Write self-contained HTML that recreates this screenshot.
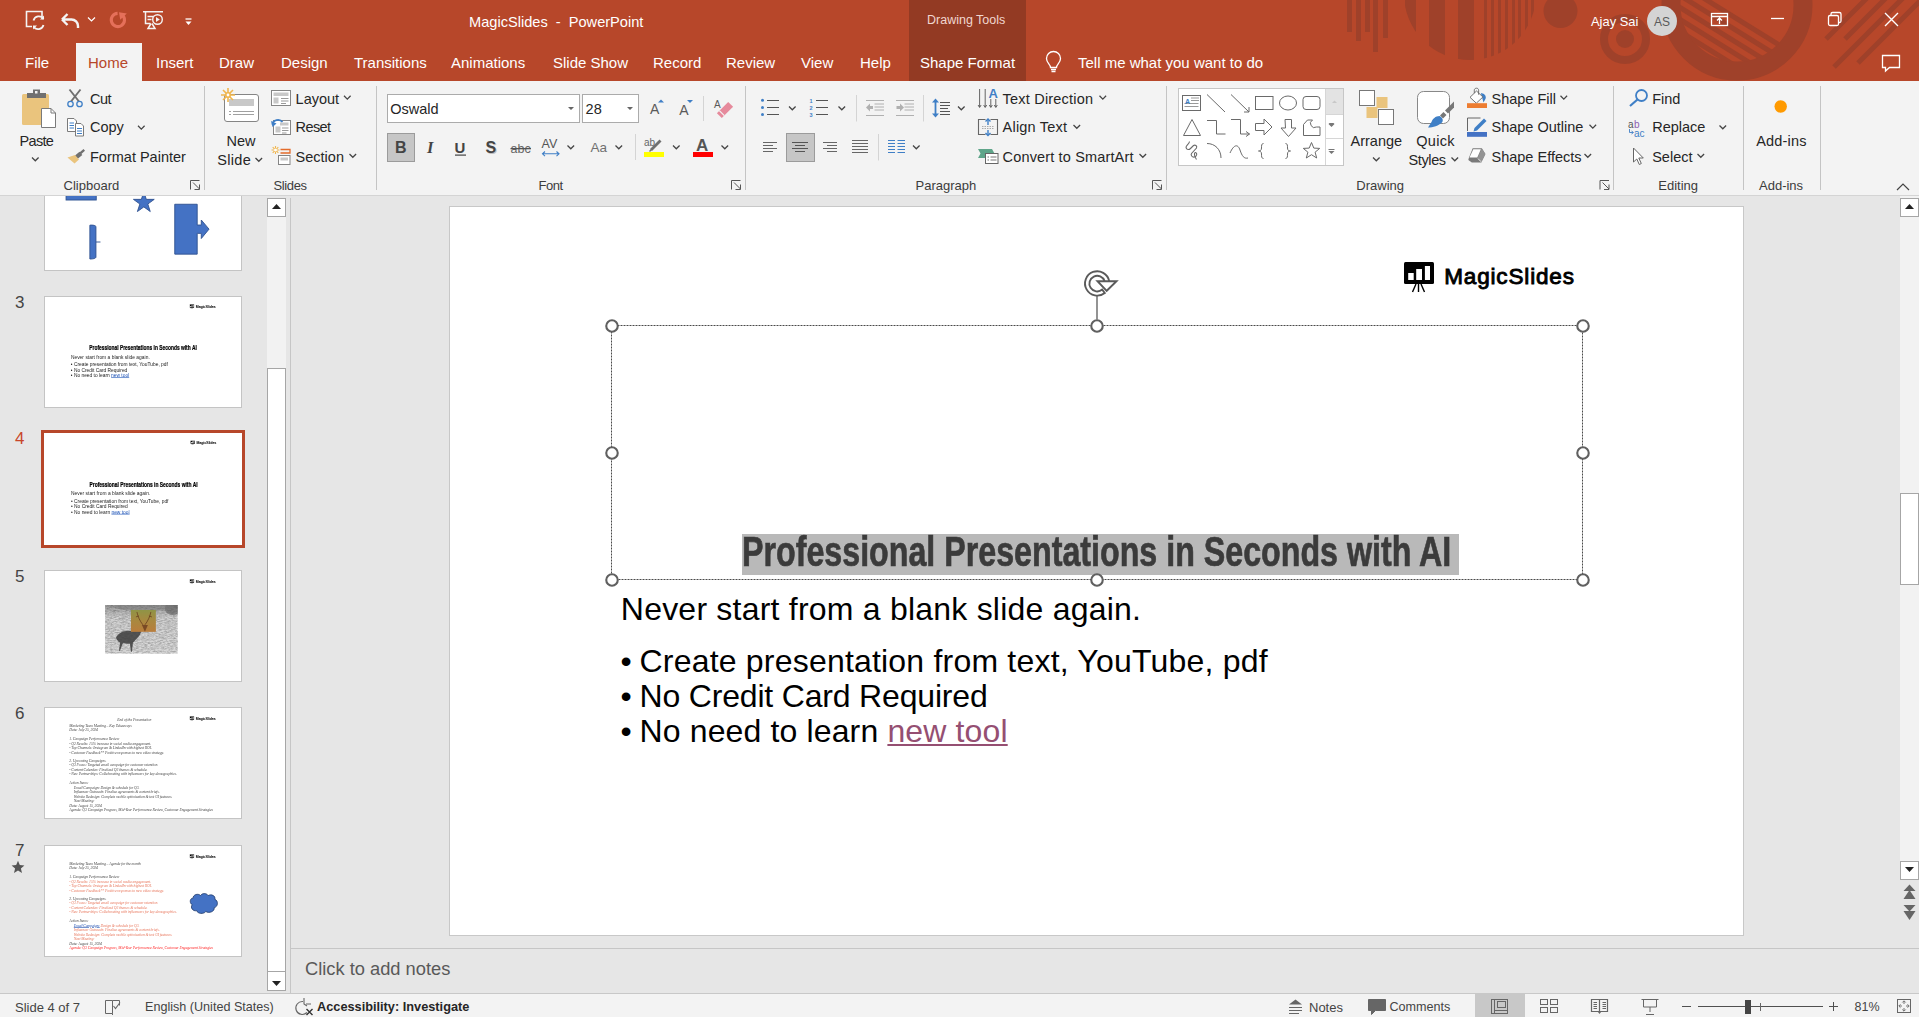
<!DOCTYPE html>
<html><head><meta charset="utf-8">
<style>
*{margin:0;padding:0;box-sizing:border-box}
html,body{width:1919px;height:1017px;overflow:hidden;background:#e6e6e6;font-family:"Liberation Sans",sans-serif;color:#262626}
.a{position:absolute}
.t{position:absolute;white-space:nowrap;line-height:1}
#top{left:0;top:0;width:1919px;height:81px;background:#b7472a}
#ctx{left:909px;top:0;width:117px;height:81px;background:#933a23}
#ribbon{left:0;top:81px;width:1919px;height:115px;background:#f3f3f3;border-bottom:1px solid #d4d4d4}
.tab{color:#fff;font-size:15px;top:55px}
.sep{position:absolute;width:1px;background:#d2d2d2}
.rl{font-size:14.5px;color:#262626}
.gl{font-size:13px;color:#444;top:178px}
#status{left:0;top:993px;width:1919px;height:24px;background:#f3f3f3;border-top:1px solid #c8c8c8}
.st{font-size:13px;color:#444;top:1001px}
</style></head><body>
<!-- title bar -->
<div id="top" class="a"></div>
<div id="ctx" class="a"></div>
<svg class="a" style="left:0;top:0" width="1919" height="81" viewBox="0 0 1919 81">
<defs>
<clipPath id="cbar"><rect x="0" y="0" width="1919" height="81"/></clipPath>
<mask id="m1"><rect x="1400" y="-10" width="140" height="90" fill="#000"/>
<rect x="1405" y="-5" width="11" height="90" fill="#fff"/><rect x="1429" y="-5" width="16" height="90" fill="#fff"/><rect x="1458" y="-5" width="16" height="90" fill="#fff"/>
<rect x="1484" y="-5" width="3" height="90" fill="#fff"/><rect x="1491" y="-5" width="3" height="90" fill="#fff"/><rect x="1498" y="-5" width="3" height="90" fill="#fff"/><rect x="1505" y="-5" width="3" height="90" fill="#fff"/><rect x="1512" y="-5" width="3" height="90" fill="#fff"/><rect x="1518" y="-5" width="3" height="90" fill="#fff"/><rect x="1525" y="-5" width="3" height="90" fill="#fff"/><rect x="1531" y="-5" width="3" height="90" fill="#fff"/>
</mask>
<clipPath id="cin"><circle cx="1737" cy="5" r="57"/></clipPath>
</defs>
<g fill="#9f412a">
<rect x="1347" y="0" width="5" height="32"/><rect x="1356" y="0" width="5" height="41"/><rect x="1365" y="0" width="5" height="32"/><rect x="1373" y="0" width="5" height="52"/><rect x="1383" y="0" width="5" height="38"/>
<circle cx="1470" cy="-6" r="66" mask="url(#m1)"/>
<circle cx="1560.5" cy="11" r="17"/>
<circle cx="1625" cy="39" r="21" fill="none" stroke="#9f412a" stroke-width="8"/>
<circle cx="1625" cy="39" r="9"/>
<circle cx="1737" cy="5" r="66" fill="none" stroke="#9f412a" stroke-width="19"/>
</g>
<g stroke="#9f412a" stroke-width="5" clip-path="url(#cin)">
<line x1="1640" y1="-41.3" x2="1800" y2="57.9"/><line x1="1640" y1="-29.3" x2="1800" y2="69.9"/><line x1="1640" y1="-17.3" x2="1800" y2="81.9"/><line x1="1640" y1="-5.3" x2="1800" y2="93.9"/><line x1="1640" y1="6.7" x2="1800" y2="105.9"/><line x1="1640" y1="18.7" x2="1800" y2="117.9"/>
</g>
<g stroke="#9f412a" stroke-width="5">
<line x1="1826" y1="39" x2="1880" y2="-15"/><line x1="1845" y1="39" x2="1899" y2="-15"/><line x1="1834" y1="67" x2="1930" y2="-29"/><line x1="1858" y1="63" x2="1950" y2="-29"/>
</g>
</svg>

<svg class="a" style="left:0;top:0" width="200" height="42" viewBox="0 0 200 42" fill="none" stroke="#fff" stroke-width="1.6">
<path d="M32 26.5H26.5V11.5H42V17" stroke="#f4f4f4"/>
<path d="M33.5 20.5a5.5 5.5 0 0 1 10 -1.5M43.5 25a5.5 5.5 0 0 1 -10 1.5" stroke="#f4f4f4" stroke-width="1.8"/>
<path d="M44 15.5v4h-4z M33 29.5v-4h4z" fill="#f4f4f4" stroke="none"/>
<path d="M62 19.5l5.5-5.5M62 19.5l5.5 5.5M62.5 19.5h9a6.5 6.5 0 0 1 6.5 6.5v2" stroke="#f4f4f4" stroke-width="2.4"/>
<path d="M88 17.5l3.5 3.5 3.5-3.5" stroke="#fff" stroke-width="1.2"/>
<path d="M117.6 13.4A6.6 6.6 0 1 0 122.2 15" stroke="#e5705a" stroke-width="3.1"/>
<path d="M119 12.2L126.8 13.4L120.2 19.8z" fill="#e5705a" stroke="none"/>
<path d="M143 11.8h20M145.5 12v11.5h5M151 23.5l-3 5h7l-3-5" stroke="#f4f4f4" stroke-width="1.5"/>
<path d="M147.5 16.5h6M147.5 19.5h4" stroke="#f4f4f4" stroke-width="1.3"/>
<circle cx="157.5" cy="19.5" r="4.8" stroke="#f4f4f4" stroke-width="1.4"/>
<path d="M156 17v5l3.8-2.5z" fill="#f4f4f4" stroke="none"/>
<path d="M185.5 19h6" stroke="#fff" stroke-width="1.3"/>
<path d="M185.5 21.5h6l-3 3.5z" fill="#fff" stroke="none"/>
</svg>
<svg class="a" style="left:1700px;top:0" width="219" height="81" viewBox="1700 0 219 81" fill="none" stroke="#fff" stroke-width="1.3">
<rect x="1711.5" y="13.5" width="16" height="12"/><path d="M1712 16.5h15M1719.5 24v-6M1717 20.5l2.5-2.5 2.5 2.5"/>
<path d="M1771 18.5h13"/>
<rect x="1828.5" y="15.5" width="10" height="10" rx="1.5"/><path d="M1831 15.5v-1.5a1.5 1.5 0 0 1 1.5 -1.5h7a1.5 1.5 0 0 1 1.5 1.5v7a1.5 1.5 0 0 1 -1.5 1.5h-1.5"/>
<path d="M1885 13l13 13M1898 13l-13 13" stroke-width="1.4"/>
<path d="M1882.5 55.5h17v12h-10l-4 3.5v-3.5h-3z"/>
</svg>
<svg class="a" style="left:1040px;top:48px" width="30" height="30" viewBox="0 0 30 30" fill="none" stroke="#fff" stroke-width="1.3">
<path d="M10.5 19.5c0-3-4-4.5-4-9a7 7 0 0 1 14 0c0 4.5-4 6-4 9z"/><path d="M11 21.5h5M11.5 23.5h4"/>
</svg>

<div class="t" style="left:469px;top:15.3px;font-size:14.6px;color:#fff">MagicSlides &nbsp;-&nbsp; PowerPoint</div>
<div class="t" style="left:927px;top:14px;font-size:12.5px;color:#f1d6cf">Drawing Tools</div>
<div class="a" style="left:76px;top:43px;width:66px;height:38px;background:#f3f3f3"></div>
<div class="t tab" style="left:25px">File</div>
<div class="t tab" style="left:88px;color:#b7472a">Home</div>
<div class="t tab" style="left:156px">Insert</div>
<div class="t tab" style="left:219px">Draw</div>
<div class="t tab" style="left:281px">Design</div>
<div class="t tab" style="left:354px">Transitions</div>
<div class="t tab" style="left:451px">Animations</div>
<div class="t tab" style="left:553px">Slide Show</div>
<div class="t tab" style="left:653px">Record</div>
<div class="t tab" style="left:726px">Review</div>
<div class="t tab" style="left:801px">View</div>
<div class="t tab" style="left:860px">Help</div>
<div class="t tab" style="left:920px">Shape Format</div>
<div class="t tab" style="left:1078px">Tell me what you want to do</div>
<div class="t" style="left:1591px;top:15.5px;font-size:12.9px;color:#fff">Ajay Sai</div>
<div class="a" style="left:1647px;top:6px;width:30px;height:30px;border-radius:50%;background:#d4d4d4"></div>
<div class="t" style="left:1654px;top:15.5px;font-size:12px;color:#5a5a5a">AS</div>

<!-- ribbon -->
<div id="ribbon" class="a"></div>
<!-- ribbon text -->
<style>
.rt{position:absolute;white-space:nowrap;line-height:1;font-size:14.5px;color:#262626}
.r1{top:91.5px}.r2{top:120.4px}.r3{top:149.5px}.b1{top:133.5px}.b2{top:153px}
.gl{position:absolute;white-space:nowrap;line-height:1;font-size:13px;color:#3c3c3c;top:178.5px}
</style>
<div class="rt b1" style="left:19.6px;letter-spacing:-0.7px">Paste</div>
<div class="rt r1" style="left:90px;letter-spacing:-0.5px">Cut</div>
<div class="rt r2" style="left:90px">Copy</div>
<div class="rt r3" style="left:90px">Format Painter</div>
<div class="gl" style="left:63.6px">Clipboard</div>
<div class="rt b1" style="left:226.5px">New</div>
<div class="rt b2" style="left:217.3px;letter-spacing:0.3px">Slide</div>
<div class="rt r1" style="left:295.6px">Layout</div>
<div class="rt r2" style="left:295.6px;letter-spacing:-0.6px">Reset</div>
<div class="rt r3" style="left:295.6px">Section</div>
<div class="gl" style="left:273.4px;letter-spacing:-0.35px">Slides</div>
<div class="a" style="left:387px;top:94px;width:193px;height:29px;background:#fff;border:1px solid #ababab"></div>
<div class="a" style="left:582px;top:94px;width:57px;height:29px;background:#fff;border:1px solid #ababab"></div>
<div class="rt" style="left:390.3px;top:102px;font-size:14.5px">Oswald</div>
<div class="rt" style="left:585.6px;top:102px;font-size:14.5px">28</div>
<div class="a" style="left:387px;top:133px;width:28px;height:29px;background:#c6c6c6;border:1px solid #9b9b9b"></div>
<div class="gl" style="left:538.5px;letter-spacing:-0.5px">Font</div>
<div class="a" style="left:786px;top:133px;width:28.5px;height:28.5px;background:#c6c6c6;border:1px solid #9b9b9b"></div>
<div class="gl" style="left:915.5px">Paragraph</div>
<div class="rt r1" style="left:1002.6px;letter-spacing:0.2px">Text Direction</div>
<div class="rt r2" style="left:1002.6px;letter-spacing:0.2px">Align Text</div>
<div class="rt r3" style="left:1002.6px;letter-spacing:0.15px">Convert to SmartArt</div>
<div class="a" style="left:1178px;top:88px;width:166px;height:78px;background:#fff;border:1px solid #c6c6c6"></div>
<div class="a" style="left:1325px;top:89px;width:18px;height:26px;background:#e3e3e3"></div>
<div class="a" style="left:1325px;top:89px;width:1px;height:76px;background:#d6d6d6"></div>
<div class="a" style="left:1325px;top:114px;width:18px;height:1px;background:#d6d6d6"></div>
<div class="a" style="left:1325px;top:138px;width:18px;height:1px;background:#d6d6d6"></div>
<div class="rt b1" style="left:1350.5px">Arrange</div>
<div class="rt b1" style="left:1416.2px;letter-spacing:0.3px">Quick</div>
<div class="rt b2" style="left:1408.6px;letter-spacing:-0.4px">Styles</div>
<div class="rt r1" style="left:1491.5px">Shape Fill</div>
<div class="rt r2" style="left:1491.5px">Shape Outline</div>
<div class="rt r3" style="left:1491.5px">Shape Effects</div>
<div class="gl" style="left:1356.3px">Drawing</div>
<div class="rt r1" style="left:1652.2px">Find</div>
<div class="rt r2" style="left:1652.2px">Replace</div>
<div class="rt r3" style="left:1652.2px">Select</div>
<div class="gl" style="left:1658.3px">Editing</div>
<div class="rt b1" style="left:1756.2px;letter-spacing:0.2px">Add-ins</div>
<div class="gl" style="left:1759px">Add-ins</div>
<svg class="a" style="left:0;top:0" width="1919" height="200" viewBox="0 0 1919 200"><g stroke="#c4c4c4" stroke-width="1"><line x1="204.5" y1="86" x2="204.5" y2="190"/><line x1="376.5" y1="86" x2="376.5" y2="190"/><line x1="745.5" y1="86" x2="745.5" y2="190"/><line x1="1166.5" y1="86" x2="1166.5" y2="190"/><line x1="1613.5" y1="86" x2="1613.5" y2="190"/><line x1="1743.5" y1="86" x2="1743.5" y2="190"/><line x1="1820.5" y1="86" x2="1820.5" y2="190"/></g><g stroke="#d4d4d4"><line x1="703.5" y1="96" x2="703.5" y2="121"/><line x1="635.5" y1="134" x2="635.5" y2="160"/><line x1="856.5" y1="95" x2="856.5" y2="121.5"/><line x1="923.5" y1="95" x2="923.5" y2="121.5"/><line x1="878.5" y1="134" x2="878.5" y2="160.5"/></g><g fill="none" stroke="#555" stroke-width="1"><path d="M190.5 189.5v-9h9M193 182.5l6.5 6.5M199.5 184.5v5h-5" /><path d="M731.5 189.5v-9h9M734 182.5l6.5 6.5M740.5 184.5v5h-5" /><path d="M1152.5 189.5v-9h9M1155 182.5l6.5 6.5M1161.5 184.5v5h-5" /><path d="M1600.0 189.5v-9h9M1602.5 182.5l6.5 6.5M1609.0 184.5v5h-5" /></g><g fill="none" stroke="#444" stroke-width="1.25"><path d="M32 157.5l3.3 3.3 3.3-3.3" /><path d="M138 125.8l3.3 3.3 3.3-3.3" /><path d="M255.5 158l3.3 3.3 3.3-3.3" /><path d="M344 95.8l3.3 3.3 3.3-3.3" /><path d="M349.5 154l3.3 3.3 3.3-3.3" /><path d="M567.5 145.5l3.3 3.3 3.3-3.3" /><path d="M615.5 145.5l3.3 3.3 3.3-3.3" /><path d="M673 145.5l3.3 3.3 3.3-3.3" /><path d="M721.5 145.5l3.3 3.3 3.3-3.3" /><path d="M789 106.5l3.3 3.3 3.3-3.3" /><path d="M838.5 106.5l3.3 3.3 3.3-3.3" /><path d="M958 106.5l3.3 3.3 3.3-3.3" /><path d="M913 145.5l3.3 3.3 3.3-3.3" /><path d="M1099.5 95.8l3.3 3.3 3.3-3.3" /><path d="M1073.5 125l3.3 3.3 3.3-3.3" /><path d="M1139.5 154l3.3 3.3 3.3-3.3" /><path d="M1373 157.5l3.3 3.3 3.3-3.3" /><path d="M1451.5 157.5l3.3 3.3 3.3-3.3" /><path d="M1560.5 95.8l3.3 3.3 3.3-3.3" /><path d="M1589.5 124.8l3.3 3.3 3.3-3.3" /><path d="M1584.5 154l3.3 3.3 3.3-3.3" /><path d="M1719.5 125.5l3.3 3.3 3.3-3.3" /><path d="M1697.5 154l3.3 3.3 3.3-3.3" /></g>
<!-- Paste -->
<rect x="22" y="94" width="27" height="31" rx="1.5" fill="#eac47d"/>
<path d="M27 98v-5h6v-3.5h7v3.5h6v5z" fill="#707070"/>
<rect x="35" y="91" width="2.5" height="2.5" fill="#f3f3f3"/>
<path d="M41.5 108.5h9.5l4.5 4.5v14.5h-14z" fill="#fff" stroke="#7a7a7a"/>
<path d="M51 108.5v4.5h4.5" fill="none" stroke="#7a7a7a"/>
<!-- scissors -->
<path d="M69.5 89.5l9.5 12M80.5 89.5l-9.5 12" stroke="#707070" stroke-width="1.9"/>
<circle cx="70.5" cy="104" r="2.7" stroke="#3f7fc6" fill="none" stroke-width="1.3"/>
<circle cx="79.5" cy="104" r="2.7" stroke="#3f7fc6" fill="none" stroke-width="1.3"/>
<!-- copy -->
<path d="M67.5 118.5h6.5l2.5 2.5v10.5h-9z" fill="#fff" stroke="#7a7a7a"/>
<path d="M69.5 123h4.5M69.5 125.5h4.5M69.5 128h4.5" stroke="#3f7fc6"/>
<path d="M75.5 123.5h5.5l2.5 2.5v10h-8z" fill="#fff" stroke="#7a7a7a"/>
<path d="M77 128.5h5M77 131h5M77 133.5h5" stroke="#3f7fc6"/>
<!-- format painter -->
<path d="M79.5 152.5l4-3.5 1.5 1.8-4 3.5z" fill="#707070"/>
<path d="M75 155.5l4.5-3.8 2.8 3.2-4.5 3.8z" fill="#707070"/>
<path d="M67.5 157.5l7.5-2.5 4 4.5-4.5 4z" fill="#eac47d"/>
<!-- new slide -->
<rect x="224.5" y="94.5" width="34" height="27" rx="2.5" fill="#fff" stroke="#858585"/>
<rect x="229" y="99" width="25" height="7" fill="#c8c8c8"/>
<path d="M229 111.5h2M233 111.5h21M229 114.5h2M233 114.5h21" stroke="#a0a0a0"/>
<g stroke="#f0b64e" stroke-width="1.6"><path d="M228 88v14M221 95h14M223 90l10 10M233 90l-10 10"/></g>
<circle cx="228" cy="95" r="3" fill="#f0b64e"/><circle cx="228" cy="95" r="1.4" fill="#fff"/>
<!-- layout -->
<rect x="271.5" y="90.5" width="19" height="15" fill="#fff" stroke="#858585"/>
<rect x="273.5" y="92.5" width="15" height="3.5" fill="#c8c8c8"/>
<rect x="273.5" y="97.5" width="5" height="6" fill="#c8c8c8"/>
<path d="M281 98.5h7.5M281 101h7.5M281 103.5h5" stroke="#999"/>
<!-- reset -->
<rect x="273.5" y="120.5" width="17" height="14" fill="#fff" stroke="#858585"/>
<rect x="275.5" y="126.5" width="5" height="6" fill="#c8c8c8"/>
<rect x="280" y="122.5" width="8.5" height="3" fill="#c8c8c8"/>
<path d="M282 128h6.5M282 130.5h6.5M282 133h4.5" stroke="#999"/>
<path d="M272.5 124.5a5.5 5 0 0 1 10-2.5" fill="none" stroke="#3f7fc6" stroke-width="1.8"/>
<path d="M271 121l1.5 6 4-3.5z" fill="#3f7fc6"/>
<!-- section -->
<g stroke="#f0b64e" stroke-width="1.1"><path d="M275.5 146v8M271.5 150h8M272.7 147.2l5.6 5.6M278.3 147.2l-5.6 5.6"/></g>
<circle cx="275.5" cy="150" r="1.5" fill="#fff"/>
<path d="M280.5 149.5h9.5v3.5h-9.5" fill="none" stroke="#e46c2b" stroke-width="1.3"/>
<rect x="278.5" y="155.5" width="11.5" height="9" fill="#fff" stroke="#858585"/>
<rect x="280.5" y="157.5" width="7.5" height="3" fill="#c8c8c8"/>
<!-- font dropdown arrows -->
<path d="M568 107h6l-3 3z M627 107h6l-3 3z" fill="#666"/>
<!-- grow/shrink -->
<text x="650" y="114.3" font-size="14" fill="#5a5a5a" font-family="Liberation Sans">A</text>
<path d="M658 102.5l3-3 3 3z" fill="#3f7fc6"/>
<text x="679.2" y="114.8" font-size="14" fill="#5a5a5a" font-family="Liberation Sans">A</text>
<path d="M687 100h6l-3 3z" fill="#3f7fc6"/>
<!-- clear formatting -->
<text x="714" y="108" font-size="10" fill="#5a5a5a" font-family="Liberation Sans">A</text>
<path d="M733.1 106.8l-4.9-4.9-11.3 11.3 4.9 4.9z" fill="#e68a9c"/>
<path d="M719.3 110.7l5 5" stroke="#f3f3f3" stroke-width="1.2"/>
<!-- B I U S abc AV -->
<text x="395" y="153.3" font-size="16" font-weight="bold" fill="#444" font-family="Liberation Sans">B</text>
<text x="427" y="153.3" font-size="16.5" font-style="italic" font-weight="bold" fill="#444" font-family="Liberation Serif">I</text>
<text x="454.5" y="152.5" font-size="15" font-weight="bold" fill="#444" font-family="Liberation Sans">U</text>
<rect x="455" y="154.5" width="11" height="1.2" fill="#444"/>
<text x="486.5" y="154.3" font-size="16" font-weight="bold" fill="#c0c0c0" font-family="Liberation Sans">S</text>
<text x="485.5" y="153.3" font-size="16" font-weight="bold" fill="#444" font-family="Liberation Sans">S</text>
<text x="510.5" y="153" font-size="12.5" fill="#666" font-family="Liberation Sans">abc</text>
<rect x="510.5" y="148" width="20.5" height="1.3" fill="#555"/>
<text x="541.5" y="148.3" font-size="12.5" fill="#555" font-family="Liberation Sans">AV</text>
<path d="M542.5 153.8h16.5M545 151.5l-2.5 2.3 2.5 2.3M556.5 151.5l2.5 2.3-2.5 2.3" fill="none" stroke="#3f7fc6" stroke-width="1.1"/>
<text x="590.5" y="151.5" font-size="13.5" fill="#707070" font-family="Liberation Sans">Aa</text>
<!-- highlighter -->
<text x="644" y="146" font-size="10" fill="#666" font-family="Liberation Sans">ab</text>
<path d="M651 150l9.5-9.5" stroke="#707070" stroke-width="2.8"/>
<path d="M649.5 151.5l2-2" stroke="#707070" stroke-width="1.5"/>
<rect x="644" y="152" width="20" height="5" fill="#ffff00"/>
<!-- font color -->
<text x="696" y="151" font-size="17" font-weight="bold" fill="#555" font-family="Liberation Sans">A</text>
<rect x="693" y="152" width="20" height="5" fill="#ff0000"/>

<!-- bullets -->
<g fill="#3f7fc6"><circle cx="762.5" cy="100.3" r="1.5"/><circle cx="762.5" cy="107.4" r="1.5"/><circle cx="762.5" cy="114.4" r="1.5"/></g>
<path d="M767 100.5h12M767 107.5h12M767 114.5h12M816 100.5h12M816 107.5h12M816 114.5h12" stroke="#555"/>
<text x="809.5" y="103" font-size="5.5" fill="#3f7fc6" font-weight="bold" font-family="Liberation Sans">1</text>
<text x="809.5" y="110" font-size="5.5" fill="#3f7fc6" font-weight="bold" font-family="Liberation Sans">2</text>
<text x="809.5" y="117" font-size="5.5" fill="#3f7fc6" font-weight="bold" font-family="Liberation Sans">3</text>
<!-- indents -->
<path d="M866 100.5h18M874.5 104h9.5M874.5 107h9.5M874.5 110h9.5M866 115.5h18M896 100.5h18M904.5 104h9.5M904.5 107h9.5M904.5 110h9.5M896 115.5h18" stroke="#b0b0b0"/>
<path d="M866 107.5l4-4v2.5h3v3h-3v2.5z" fill="#b0b0b0"/>
<path d="M904 107.5l-4-4v2.5h-3.5v3h3.5v2.5z" fill="#b0b0b0"/>
<!-- line spacing -->
<path d="M935.5 101v14" stroke="#3f7fc6" stroke-width="1.8"/>
<path d="M932 102.5l3.5-4 3.5 4zM932 113.5l3.5 4 3.5-4z" fill="#3f7fc6"/>
<path d="M940 102.5h10M940 105.5h10M940 108.5h8M940 111.5h10M940 114.5h10" stroke="#555"/>
<!-- align -->
<path d="M763 142.5h14M763 145.5h10M763 148.5h14M763 151.5h10" stroke="#666"/>
<path d="M792 142.5h16M795 145.5h10M792 148.5h16M795 151.5h10" stroke="#555"/>
<path d="M823 142.5h14M827 145.5h10M823 148.5h14M827 151.5h10" stroke="#666"/>
<path d="M852 140.5h16M852 143.5h16M852 146.5h16M852 149.5h16M852 152.5h16" stroke="#666"/>
<path d="M888 140.5h7M888 143.5h7M888 146.5h7M888 149.5h7M888 152.5h7M897.5 140.5h7.5M897.5 143.5h7.5M897.5 146.5h7.5M897.5 149.5h7.5M897.5 152.5h7.5" stroke="#3f7fc6"/>
<!-- text direction -->
<path d="M979.6 89v18M985.2 89v18M990.8 99v8M995.8 99v8" stroke="#555" stroke-width="0.9"/>
<path d="M978.1 105l1.5 2.5 1.5-2.5M983.7 105l1.5 2.5 1.5-2.5M989.3 105l1.5 2.5 1.5-2.5M994.3 105l1.5 2.5 1.5-2.5" fill="none" stroke="#555" stroke-width="0.9"/>
<text x="988.6" y="98" font-size="13" font-weight="bold" fill="#3f7fc6" font-family="Liberation Sans">A</text>
<!-- align text -->
<path d="M985.5 119.5h-7v15h7M990.5 119.5h7v15h-7" fill="none" stroke="#666" stroke-width="1.1"/>
<path d="M982 126.5h12M982 128.5h12" stroke="#999" stroke-width="0.8" stroke-dasharray="1.5 1"/>
<path d="M988 120v5M988 130v5" stroke="#3f7fc6" stroke-width="1.4"/>
<path d="M985.5 121.5l2.5-2.5 2.5 2.5M985.5 133l2.5 2.5 2.5-2.5" fill="none" stroke="#3f7fc6" stroke-width="1.4"/>
<!-- smartart -->
<path d="M978 149h14l2.5 4.5-2.5 4.5h-14l2.5-4.5z" fill="#5fa58a"/>
<rect x="985.5" y="153.5" width="12.5" height="10" fill="#fff" stroke="#666"/>
<path d="M987.5 157h1.5M990.5 157h6M987.5 160h1.5M990.5 160h6" stroke="#666" stroke-width="0.9"/>

<g fill="none" stroke="#6a6a6a" stroke-width="1">
<rect x="1182.5" y="95.5" width="18" height="15"/>
<path d="M1191 98h8M1191 100.5h8M1184.5 103.5h14M1184.5 106.5h14" stroke="#999"/>
<path d="M1207 94.5l18 17.5M1231 94.5l18 17.5M1244 112h5v-5"/>
<rect x="1255.5" y="96.5" width="17.5" height="13"/>
<ellipse cx="1288" cy="103" rx="8.5" ry="7"/>
<rect x="1303" y="96.5" width="17" height="13" rx="3"/>
<path d="M1183.5 135.5l8.5-16 8.5 16z"/>
<path d="M1207 120.5h9.5v13.5h9"/>
<path d="M1231 119.5h9.5v14.5h9M1246 131.5l3.5 2.5-3.5 2.5"/>
<path d="M1255.5 123.5h8.5v-4.5l8 8-8 8v-4.5h-8.5z"/>
<path d="M1285 119.5h6.5v8.5h4.5l-7.5 8.5-7.5-8.5h4.5z"/>
<path d="M1303.5 124.5l4-4.5h5a4 4 0 0 0 4 7h3.5v8.5h-16.5z"/>
<path d="M1189.5 141.6C1189.5 144 1185 146 1186.2 148C1187 150 1189 150 1190.5 148.5L1193.5 145.5C1195 144.5 1197.5 145.5 1196.5 148L1191.5 153.5C1190.5 155 1192 157.5 1194.5 157C1197 156.5 1197.5 153 1195.5 152.5C1194 152.5 1194 156 1196.5 159.5" stroke-width="1.1"/>
<path d="M1207 143.5c8 0 14 6 14 14.5"/>
<path d="M1230 153c4-9 8-9 10-3s4 9 8 8"/>
<path d="M1263.5 143.5c-2 0-2 2-2 4.5s-1.5 3-3 3c1.5 0 3 .5 3 3s0 4.5 2 4.5"/>
<path d="M1285.5 143.5c2 0 2 2 2 4.5s1.5 3 3 3c-1.5 0-3 .5-3 3s0 4.5-2 4.5"/>
<path d="M1311.5 142.5l2.3 5.6 5.9.3-4.6 3.8 1.6 5.8-5.2-3.3-5.2 3.3 1.6-5.8-4.6-3.8 5.9-.3z"/>
</g>
<text x="1185" y="104" font-size="7" font-weight="bold" fill="#3f7fc6" font-family="Liberation Sans">A</text>
<path d="M1332 103l2.5-2.5 2.5 2.5z" fill="#c8c8c8"/>
<path d="M1331.5 126l3-3h-6z" fill="#777"/>
<path d="M1328.5 149.5h6" stroke="#777" stroke-width="1"/><path d="M1331.5 154l3-3h-6z" fill="#777"/>
<path d="M1328.5 124h6l-3 3z" fill="#777"/>

<!-- arrange -->
<rect x="1376.5" y="97" width="11" height="11" fill="#eac47d"/>
<rect x="1366.5" y="107" width="11" height="11" fill="#eac47d"/>
<rect x="1359.5" y="90.5" width="15" height="15" fill="#fff" stroke="#777"/>
<rect x="1378.5" y="109.5" width="15" height="15" fill="#fff" stroke="#777"/>
<!-- quick styles -->
<rect x="1417.5" y="91.5" width="32" height="32" rx="6" fill="#fff" stroke="#888"/>
<path d="M1454 101.5l-9 9 3 3 6-6z" fill="#777"/>
<path d="M1443.5 112l-3.5 3.5 3 3 3.5-3.5z" fill="#777"/>
<path d="M1439.5 116c-4 0-7 3-8 6l-3.5 5.5c5 0 11-2 14-5 1.5-2 1-4.5-2.5-6.5z" fill="#3f7fc6"/>
<!-- shape fill -->
<path d="M1480.8 93c2.5 0.5 5 1.5 5 4.5 0 1.5-1.5 3.5-2.3 5z" fill="#3f7fc6"/>
<path d="M1476.5 91l6.4 6-6.6 6.2-6.3-5.9z" fill="#fff" stroke="#666" stroke-width="0.9"/>
<path d="M1474.3 93.2v-3c0-1.2 0.9-2 2.2-2s2.1 0.8 2.1 2v4.5" fill="none" stroke="#666" stroke-width="0.9"/>
<rect x="1467" y="103.2" width="20" height="4.8" fill="#ed7d31"/>
<!-- shape outline -->
<path d="M1467.5 131v-13h13" fill="none" stroke="#666"/>
<path d="M1484 118.5l2.5 2.5-9.5 9.5-3.5 1 1-3.5z" fill="#3f7fc6"/>
<rect x="1467" y="132" width="20" height="4.8" fill="#4472c4"/>
<!-- shape effects -->
<path d="M1472.7 148.3h9.1l3.6 5.6-4.2 8.5h-9.4l-3.5-2.4 0.5-2z" fill="#7a7a7a"/>
<path d="M1481.8 148.3l3.6 5.6-4.2 8.5-3.5-4.4z" fill="#939393"/>
<path d="M1473.3 149.3h7.6l-3.6 8.2h-7.8z" fill="#fff"/>
<path d="M1478 158.6l3 3.1" stroke="#f3f3f3" stroke-width="0.9"/>
<!-- find -->
<circle cx="1641.5" cy="95.5" r="5.5" fill="none" stroke="#3f7fc6" stroke-width="1.8"/>
<path d="M1637.5 99.5l-7.5 6.5" stroke="#3f7fc6" stroke-width="2.2"/>
<!-- replace -->
<text x="1628" y="128" font-size="10" fill="#555" font-family="Liberation Sans">a</text>
<text x="1634" y="128" font-size="10" fill="#8e5fb2" font-family="Liberation Sans">b</text>
<text x="1634" y="136.5" font-size="10" fill="#3f7fc6" font-family="Liberation Sans">ac</text>
<path d="M1629.5 129v3.5h3.5M1631.5 131l2 1.5-2 1.5" fill="none" stroke="#3f7fc6" stroke-width="0.9"/>
<!-- select -->
<path d="M1633.5 148v14l3.3-3 2.5 5.5 2-1-2.5-5.5h4.5z" fill="#fff" stroke="#666" stroke-width="1"/>
<!-- add-ins dot -->
<circle cx="1780.7" cy="106.5" r="6.2" fill="#ff9a00"/>
<!-- collapse -->
<path d="M1897 190l6-6 6 6" fill="none" stroke="#444" stroke-width="1.2"/>
</svg>


<!-- left panel -->
<div class="a" style="left:0;top:196px;width:267px;height:797px;overflow:hidden"><div class="a" style="left:0;top:-196px;width:267px;height:1017px">
<!-- thumbnails -->
<div class="a" style="left:44px;top:158.5px;width:198px;height:112px;background:#fff;border:1px solid #c4c4c4"></div>
<div class="a" style="left:45px;top:159.5px;width:1293px;height:728px;transform:scale(0.15159);transform-origin:0 0;overflow:hidden"><svg class="a" style="left:0;top:0" width="1293" height="728" viewBox="0 0 1293 728">
<g fill="#4472c4" stroke="#2f528f" stroke-width="6">
<rect x="139" y="180" width="199" height="84"/>
<path d="M652 210l16.2 49.7h52.3l-42.3 30.7 16.2 49.7-42.4-30.7-42.4 30.7 16.2-49.7-42.3-30.7h52.3z"/>
<path d="M296 430c20-2 40 2 40 10v200c0 10-20 13-40 13z"/><path d="M336 541h30" />
<path d="M856 292h148v137h27v-33l51 60-51 62v-34h-27v137h-148z"/>
</g></svg></div>
<div class="t" style="left:15px;top:293.5px;font-size:17px;color:#444">3</div>
<div class="a" style="left:44px;top:295.5px;width:198px;height:112px;background:#fff;border:1px solid #c4c4c4"></div>
<div class="a" style="left:45px;top:296.3px;width:1293px;height:728px;transform:scale(0.15159);transform-origin:0 0;overflow:hidden"><svg class="a" style="left:954px;top:55px" width="32" height="38" viewBox="0 0 32 38">
<rect x="0" y="0" width="30" height="22" rx="1.5" fill="#000"/>
<rect x="4.2" y="11" width="5.5" height="7" fill="#fff"/><rect x="12.2" y="7" width="5.8" height="11" fill="#fff"/><rect x="20.9" y="4" width="5.1" height="14" fill="#fff"/>
<path d="M12 22l-3.5 8M14.5 22v8M17 22l3.5 8" stroke="#000" stroke-width="1.4"/>
</svg>
<div class="t" style="left:994.2px;top:58.6px;font-size:22.5px;color:#000;letter-spacing:0.85px;-webkit-text-stroke:0.9px #000">MagicSlides</div>
<div class="t" style="left:292px;top:322.9px;font-size:43px;font-weight:bold;color:#000;-webkit-text-stroke:1.5px #000;transform:scaleX(0.749);transform-origin:0 0">Professional Presentations in Seconds with AI</div>
<div class="t" style="left:170.8px;top:385.9px;font-size:32px;color:#222;letter-spacing:0.22px">Never start from a blank slide again.</div>
<div class="t" style="left:170.5px;top:437.8px;font-size:32px;color:#222">• Create presentation from text, YouTube, pdf</div>
<div class="t" style="left:170.5px;top:472.5px;font-size:32px;color:#222">• No Credit Card Required</div>
<div class="t" style="left:170.5px;top:507.6px;font-size:32px;color:#222">• No need to learn <span style="color:#1f55b8;text-decoration:underline;text-decoration-thickness:4px">new tool</span></div>
</div>
<div class="a" style="left:41px;top:430px;width:204px;height:118px;border:3px solid #b7472a"></div>
<div class="t" style="left:15px;top:430px;font-size:17px;color:#c8462a">4</div>
<div class="a" style="left:44px;top:433px;width:198px;height:112px;background:#fff"></div>
<div class="a" style="left:44.5px;top:432.3px;width:1293px;height:728px;transform:scale(0.15236);transform-origin:0 0;overflow:hidden"><svg class="a" style="left:954px;top:55px" width="32" height="38" viewBox="0 0 32 38">
<rect x="0" y="0" width="30" height="22" rx="1.5" fill="#000"/>
<rect x="4.2" y="11" width="5.5" height="7" fill="#fff"/><rect x="12.2" y="7" width="5.8" height="11" fill="#fff"/><rect x="20.9" y="4" width="5.1" height="14" fill="#fff"/>
<path d="M12 22l-3.5 8M14.5 22v8M17 22l3.5 8" stroke="#000" stroke-width="1.4"/>
</svg>
<div class="t" style="left:994.2px;top:58.6px;font-size:22.5px;color:#000;letter-spacing:0.85px;-webkit-text-stroke:0.9px #000">MagicSlides</div>
<div class="t" style="left:292px;top:322.9px;font-size:43px;font-weight:bold;color:#000;-webkit-text-stroke:1.5px #000;transform:scaleX(0.749);transform-origin:0 0">Professional Presentations in Seconds with AI</div>
<div class="t" style="left:170.8px;top:385.9px;font-size:32px;color:#222;letter-spacing:0.22px">Never start from a blank slide again.</div>
<div class="t" style="left:170.5px;top:437.8px;font-size:32px;color:#222">• Create presentation from text, YouTube, pdf</div>
<div class="t" style="left:170.5px;top:472.5px;font-size:32px;color:#222">• No Credit Card Required</div>
<div class="t" style="left:170.5px;top:507.6px;font-size:32px;color:#222">• No need to learn <span style="color:#1f55b8;text-decoration:underline;text-decoration-thickness:4px">new tool</span></div>
</div>
<div class="t" style="left:15px;top:567.5px;font-size:17px;color:#444">5</div>
<div class="a" style="left:44px;top:570px;width:198px;height:112px;background:#fff;border:1px solid #c4c4c4"></div>
<div class="a" style="left:45px;top:571px;width:1293px;height:728px;transform:scale(0.15159);transform-origin:0 0;overflow:hidden"><svg class="a" style="left:954px;top:55px" width="32" height="38" viewBox="0 0 32 38">
<rect x="0" y="0" width="30" height="22" rx="1.5" fill="#000"/>
<rect x="4.2" y="11" width="5.5" height="7" fill="#fff"/><rect x="12.2" y="7" width="5.8" height="11" fill="#fff"/><rect x="20.9" y="4" width="5.1" height="14" fill="#fff"/>
<path d="M12 22l-3.5 8M14.5 22v8M17 22l3.5 8" stroke="#000" stroke-width="1.4"/>
</svg>
<div class="t" style="left:994.2px;top:58.6px;font-size:22.5px;color:#000;letter-spacing:0.85px;-webkit-text-stroke:0.9px #000">MagicSlides</div><svg class="a" style="left:396px;top:224px" width="480" height="322" viewBox="0 0 73 49" preserveAspectRatio="none">
<defs>
<linearGradient id="g5" x1="0" y1="0" x2="0" y2="1"><stop offset="0" stop-color="#9a9a9a"/><stop offset="0.25" stop-color="#d2d2d2"/><stop offset="1" stop-color="#dadada"/></linearGradient>
<filter id="nz" x="0" y="0" width="100%" height="100%"><feTurbulence type="fractalNoise" baseFrequency="0.35 0.9" numOctaves="2" seed="3"/><feColorMatrix type="matrix" values="0 0 0 0 0  0 0 0 0 0  0 0 0 0 0  0 0 0 -1.6 1.1"/></filter>
<linearGradient id="o5" x1="0" y1="0" x2="0" y2="1"><stop offset="0" stop-color="#8f9446"/><stop offset="0.5" stop-color="#a9883f"/><stop offset="1" stop-color="#b97d3c"/></linearGradient>
</defs>
<rect width="73" height="49" fill="url(#g5)"/>
<rect width="73" height="49" filter="url(#nz)" opacity="0.3"/>
<ellipse cx="68" cy="4" rx="8" ry="6" fill="#5a5a5a" opacity="0.6"/>
<ellipse cx="40" cy="2" rx="30" ry="4" fill="#7a7a7a" opacity="0.5"/>
<path d="M11 33c2-5 8-8 15-7 6 0 9 0 11-1l-2 5c-2 3-5 6-7 8l-1 9h-1l-1-8c-3 0-5 0-7-1l-3 8h-1l1-8c-2-1-3-3-4-5z" fill="#3c3c3c" opacity="0.85"/>
<rect x="26" y="5" width="25" height="22" fill="url(#o5)"/>
<path d="M32 7c1 5 3 9 6 13M46 7c-1 5-3 9-6 13M34 11l-3 1M44 11l3 1" stroke="#6a4020" stroke-width="0.8" fill="none"/>
<path d="M37 20l3 7 3-7z" fill="#7a4a25"/>
</svg></div>
<div class="t" style="left:15px;top:704.5px;font-size:17px;color:#444">6</div>
<div class="a" style="left:44px;top:707px;width:198px;height:112px;background:#fff;border:1px solid #c4c4c4"></div>
<div class="a" style="left:45px;top:708px;width:1293px;height:728px;transform:scale(0.15159);transform-origin:0 0;overflow:hidden"><svg class="a" style="left:954px;top:55px" width="32" height="38" viewBox="0 0 32 38">
<rect x="0" y="0" width="30" height="22" rx="1.5" fill="#000"/>
<rect x="4.2" y="11" width="5.5" height="7" fill="#fff"/><rect x="12.2" y="7" width="5.8" height="11" fill="#fff"/><rect x="20.9" y="4" width="5.1" height="14" fill="#fff"/>
<path d="M12 22l-3.5 8M14.5 22v8M17 22l3.5 8" stroke="#000" stroke-width="1.4"/>
</svg>
<div class="t" style="left:994.2px;top:58.6px;font-size:22.5px;color:#000;letter-spacing:0.85px;-webkit-text-stroke:0.9px #000">MagicSlides</div>
<div class="t" style="left:476.3px;top:65.2px;font-size:25px;color:#4a4a4a;font-family:'Liberation Serif',serif;font-style:italic;letter-spacing:-0.5px">End of the Presentation</div>
<div class="t" style="left:159.6px;top:106.1px;font-size:25px;color:#4a4a4a;font-family:'Liberation Serif',serif;font-style:italic;letter-spacing:-0.5px">Marketing Team Meeting – Key Takeaways</div>
<div class="t" style="left:159.6px;top:131.8px;font-size:25px;color:#4a4a4a;font-family:'Liberation Serif',serif;font-style:italic;letter-spacing:-0.5px">Date: July 25, 2024</div>
<div class="t" style="left:159.6px;top:192.5px;font-size:25px;color:#4a4a4a;font-family:'Liberation Serif',serif;font-style:italic;letter-spacing:-0.5px">1. Campaign Performance Review</div>
<div class="t" style="left:159.6px;top:224.9px;font-size:25px;color:#4a4a4a;font-family:'Liberation Serif',serif;font-style:italic;letter-spacing:-0.5px">- Q2 Results: 15% increase in social media engagement.</div>
<div class="t" style="left:159.6px;top:251.9px;font-size:25px;color:#4a4a4a;font-family:'Liberation Serif',serif;font-style:italic;letter-spacing:-0.5px">- Top Channels: Instagram &amp; LinkedIn with highest ROI.</div>
<div class="t" style="left:159.6px;top:284.2px;font-size:25px;color:#4a4a4a;font-family:'Liberation Serif',serif;font-style:italic;letter-spacing:-0.5px">- Customer Feedback** Positive responses to new video strategy.</div>
<div class="t" style="left:159.6px;top:335.7px;font-size:25px;color:#4a4a4a;font-family:'Liberation Serif',serif;font-style:italic;letter-spacing:-0.5px">2. Upcoming Campaigns.</div>
<div class="t" style="left:159.6px;top:363.4px;font-size:25px;color:#4a4a4a;font-family:'Liberation Serif',serif;font-style:italic;letter-spacing:-0.5px">- Q3 Focus: Targeted email campaign for customer retention.</div>
<div class="t" style="left:159.6px;top:395.7px;font-size:25px;color:#4a4a4a;font-family:'Liberation Serif',serif;font-style:italic;letter-spacing:-0.5px">- Content Calendar: Finalized Q3 themes &amp; schedule.</div>
<div class="t" style="left:159.6px;top:422.8px;font-size:25px;color:#4a4a4a;font-family:'Liberation Serif',serif;font-style:italic;letter-spacing:-0.5px">- New Partnerships: Collaborating with influencers for key demographics.</div>
<div class="t" style="left:159.6px;top:482.1px;font-size:25px;color:#4a4a4a;font-family:'Liberation Serif',serif;font-style:italic;letter-spacing:-0.5px">Action Items:</div>
<div class="t" style="left:190.0px;top:515.1px;font-size:25px;color:#4a4a4a;font-family:'Liberation Serif',serif;font-style:italic;letter-spacing:-0.5px">Email Campaign: Design &amp; schedule for Q3.</div>
<div class="t" style="left:190.0px;top:541.5px;font-size:25px;color:#4a4a4a;font-family:'Liberation Serif',serif;font-style:italic;letter-spacing:-0.5px">Influencer Outreach: Finalize agreements &amp; content briefs.</div>
<div class="t" style="left:190.0px;top:573.8px;font-size:25px;color:#4a4a4a;font-family:'Liberation Serif',serif;font-style:italic;letter-spacing:-0.5px">Website Redesign: Complete mobile optimization &amp; test UI features.</div>
<div class="t" style="left:190.0px;top:600.9px;font-size:25px;color:#4a4a4a;font-family:'Liberation Serif',serif;font-style:italic;letter-spacing:-0.5px">Next Meeting:</div>
<div class="t" style="left:159.6px;top:633.2px;font-size:25px;color:#4a4a4a;font-family:'Liberation Serif',serif;font-style:italic;letter-spacing:-0.5px">Date: August 15, 2024</div>
<div class="t" style="left:159.6px;top:660.2px;font-size:25px;color:#4a4a4a;font-family:'Liberation Serif',serif;font-style:italic;letter-spacing:-0.5px">Agenda: Q3 Campaign Progress, Mid-Year Performance Review, Customer Engagement Strategies</div></div>
<div class="t" style="left:15px;top:841.5px;font-size:17px;color:#444">7</div>
<svg class="a" style="left:11px;top:860px" width="14" height="14" viewBox="0 0 14 14"><path d="M7 .8l1.8 4.3 4.6.3-3.5 3 1.1 4.5L7 10.4 3 12.9l1.1-4.5-3.5-3 4.6-.3z" fill="#555"/></svg>
<div class="a" style="left:44px;top:844.5px;width:198px;height:112px;background:#fff;border:1px solid #c4c4c4"></div>
<div class="a" style="left:45px;top:845.5px;width:1293px;height:728px;transform:scale(0.15159);transform-origin:0 0;overflow:hidden"><svg class="a" style="left:954px;top:55px" width="32" height="38" viewBox="0 0 32 38">
<rect x="0" y="0" width="30" height="22" rx="1.5" fill="#000"/>
<rect x="4.2" y="11" width="5.5" height="7" fill="#fff"/><rect x="12.2" y="7" width="5.8" height="11" fill="#fff"/><rect x="20.9" y="4" width="5.1" height="14" fill="#fff"/>
<path d="M12 22l-3.5 8M14.5 22v8M17 22l3.5 8" stroke="#000" stroke-width="1.4"/>
</svg>
<div class="t" style="left:994.2px;top:58.6px;font-size:22.5px;color:#000;letter-spacing:0.85px;-webkit-text-stroke:0.9px #000">MagicSlides</div>
<div class="t" style="left:159.6px;top:102.8px;font-size:25px;color:#4a4a4a;font-family:'Liberation Serif',serif;font-style:italic;letter-spacing:-0.5px">Marketing Team Meeting – Agenda for the month</div>
<div class="t" style="left:159.6px;top:129.9px;font-size:25px;color:#4a4a4a;font-family:'Liberation Serif',serif;font-style:italic;letter-spacing:-0.5px">Date: July 25, 2024</div>
<div class="t" style="left:159.6px;top:188.6px;font-size:25px;color:#4a4a4a;font-family:'Liberation Serif',serif;font-style:italic;letter-spacing:-0.5px">1. Campaign Performance Review</div>
<div class="t" style="left:159.6px;top:222.2px;font-size:25px;color:#e8785e;font-family:'Liberation Serif',serif;font-style:italic;letter-spacing:-0.5px">- Q2 Results: 15% increase in social media engagement.</div>
<div class="t" style="left:159.6px;top:248.6px;font-size:25px;color:#e8785e;font-family:'Liberation Serif',serif;font-style:italic;letter-spacing:-0.5px">- Top Channels: Instagram &amp; LinkedIn with highest ROI.</div>
<div class="t" style="left:159.6px;top:282.2px;font-size:25px;color:#e8785e;font-family:'Liberation Serif',serif;font-style:italic;letter-spacing:-0.5px">- Customer Feedback** Positive responses to new video strategy.</div>
<div class="t" style="left:159.6px;top:335.0px;font-size:25px;color:#4a4a4a;font-family:'Liberation Serif',serif;font-style:italic;letter-spacing:-0.5px">2. Upcoming Campaigns.</div>
<div class="t" style="left:159.6px;top:360.7px;font-size:25px;color:#e8785e;font-family:'Liberation Serif',serif;font-style:italic;letter-spacing:-0.5px">- Q3 Focus: Targeted email campaign for customer retention.</div>
<div class="t" style="left:159.6px;top:393.7px;font-size:25px;color:#e8785e;font-family:'Liberation Serif',serif;font-style:italic;letter-spacing:-0.5px">- Content Calendar: Finalized Q3 themes &amp; schedule.</div>
<div class="t" style="left:159.6px;top:420.8px;font-size:25px;color:#e8785e;font-family:'Liberation Serif',serif;font-style:italic;letter-spacing:-0.5px">- New Partnerships: Collaborating with influencers for key demographics.</div>
<div class="t" style="left:159.6px;top:478.2px;font-size:25px;color:#4a4a4a;font-family:'Liberation Serif',serif;font-style:italic;letter-spacing:-0.5px">Action Items:</div>
<div class="t" style="left:190.0px;top:511.8px;font-size:25px;color:#e8785e;font-family:'Liberation Serif',serif;font-style:italic;letter-spacing:-0.5px"><span style="color:#1f4fb0;text-decoration:underline;text-decoration-thickness:4px">Email Campaign:</span> Design &amp; schedule for Q3.</div>
<div class="t" style="left:190.0px;top:538.2px;font-size:25px;color:#e8785e;font-family:'Liberation Serif',serif;font-style:italic;letter-spacing:-0.5px">Influencer Outreach: Finalize agreements &amp; content briefs.</div>
<div class="t" style="left:190.0px;top:571.9px;font-size:25px;color:#e8785e;font-family:'Liberation Serif',serif;font-style:italic;letter-spacing:-0.5px">Website Redesign: Complete mobile optimization &amp; test UI features.</div>
<div class="t" style="left:190.0px;top:598.9px;font-size:25px;color:#e8785e;font-family:'Liberation Serif',serif;font-style:italic;letter-spacing:-0.5px">Next Meeting:</div>
<div class="t" style="left:159.6px;top:629.9px;font-size:25px;color:#4a4a4a;font-family:'Liberation Serif',serif;font-style:italic;letter-spacing:-0.5px">Date: August 15, 2024</div>
<div class="t" style="left:159.6px;top:656.3px;font-size:25px;color:#ff2a2a;font-family:'Liberation Serif',serif;font-style:italic;letter-spacing:-0.5px">Agenda: Q3 Campaign Progress, Mid-Year Performance Review, Customer Engagement Strategies</div><svg class="a" style="left:946px;top:305px" width="200" height="150" viewBox="0 0 200 150">
<path d="M30 40c0-25 35-35 50-18 10-18 40-18 50 0 20-12 50 0 45 25 25 10 20 50-5 55 5 25-35 40-55 25-15 20-55 15-60-5-25 5-45-20-30-40-20-10-15-45 5-42z" fill="#4472c4" stroke="#1f3864" stroke-width="5"/>
</svg></div>
</div>
</div><div class="a" style="left:267px;top:198px;width:19px;height:792px;background:#f2f2f2"></div>
<div class="a" style="left:267px;top:198px;width:19px;height:19px;background:#fff;border:1px solid #a6a6a6"></div>
<div class="a" style="left:267px;top:368px;width:19px;height:604px;background:#fff;border:1px solid #a6a6a6"></div>
<div class="a" style="left:267px;top:971px;width:19px;height:20px;background:#fff;border:1px solid #a6a6a6"></div>
<svg class="a" style="left:267px;top:198px" width="19" height="793" viewBox="0 0 19 793"><path d="M5 11h9l-4.5-5z" fill="#222"/><path d="M5 783h9l-4.5 5z" fill="#222"/></svg>
<div class="a" style="left:1900px;top:196px;width:19px;height:666px;background:#f2f2f2"></div>
<div class="a" style="left:1900px;top:198px;width:19px;height:19px;background:#fff;border:1px solid #a6a6a6"></div>
<div class="a" style="left:1900px;top:493px;width:19px;height:92px;background:#fff;border:1px solid #a6a6a6"></div>
<div class="a" style="left:1900px;top:861px;width:19px;height:19px;background:#fff;border:1px solid #a6a6a6"></div>
<svg class="a" style="left:1900px;top:198px" width="19" height="730" viewBox="0 0 19 730"><path d="M5 11h9l-4.5-5z" fill="#222"/><path d="M5 669h9l-4.5 5z" fill="#222"/>
<path d="M9.5 686.5l-6 6.5h2.5l-2.5 0v0M9.5 686.5l6 6.5h-12z" fill="#666"/><path d="M9.5 692l-6 9h12z" fill="#666"/><path d="M3.5 707h12l-6 6.5z" fill="#666"/><path d="M3.5 713h12l-6 9z" fill="#666"/></svg>
<div class="a" style="left:290px;top:198px;width:1px;height:795px;background:#c6c6c6"></div>

<!-- slide -->
<div class="a" style="left:449px;top:206px;width:1295px;height:730px;background:#fff;border:1px solid #c8c8c8"></div>
<div class="a" style="left:450px;top:207px;width:1293px;height:728px;overflow:hidden">
<svg class="a" style="left:954px;top:55px" width="32" height="38" viewBox="0 0 32 38">
<rect x="0" y="0" width="30" height="22" rx="1.5" fill="#000"/>
<rect x="4.2" y="11" width="5.5" height="7" fill="#fff"/><rect x="12.2" y="7" width="5.8" height="11" fill="#fff"/><rect x="20.9" y="4" width="5.1" height="14" fill="#fff"/>
<path d="M12 22l-3.5 8M14.5 22v8M17 22l3.5 8" stroke="#000" stroke-width="1.4"/>
</svg>
<div class="t" style="left:994.2px;top:58.6px;font-size:22.5px;color:#000;letter-spacing:0.85px;-webkit-text-stroke:0.9px #000">MagicSlides</div>
<div class="a" style="left:292.2px;top:327px;width:717px;height:40.7px;background:#b9b9b9"></div>
<div class="t" style="left:292px;top:322.9px;font-size:43px;font-weight:bold;color:#3b3b3b;-webkit-text-stroke:0.7px #3b3b3b;transform:scaleX(0.749);transform-origin:0 0">Professional Presentations in Seconds with AI</div>
<div class="t" style="left:170.8px;top:385.9px;font-size:32px;color:#000;letter-spacing:0.22px">Never start from a blank slide again.</div>
<div class="t" style="left:170.5px;top:437.8px;font-size:32px;color:#000">•</div>
<div class="t" style="left:170.5px;top:472.5px;font-size:32px;color:#000">•</div>
<div class="t" style="left:170.5px;top:507.6px;font-size:32px;color:#000">•</div>
<div class="t" style="left:189.5px;top:437.8px;font-size:32px;color:#000;letter-spacing:0.2px">Create presentation from text, YouTube, pdf</div>
<div class="t" style="left:189.5px;top:472.5px;font-size:32px;color:#000;letter-spacing:-0.18px">No Credit Card Required</div>
<div class="t" style="left:189.5px;top:507.6px;font-size:32px;color:#000;letter-spacing:0.14px">No need to learn <span style="color:#954f72;text-decoration:underline;text-decoration-thickness:2px;text-underline-offset:2px">new tool</span></div>

</div>
<svg class="a" style="left:0;top:0" width="1919" height="1017" viewBox="0 0 1919 1017" style="pointer-events:none">
<rect x="611.5" y="325.5" width="971" height="254" fill="none" stroke="#4a4a4a" stroke-width="1" stroke-dasharray="2 1"/>
<line x1="1097" y1="296" x2="1097" y2="319.5" stroke="#5a5a5a" stroke-width="1.3"/>
<g fill="#fff" stroke="#606060" stroke-width="2.1">
<circle cx="612" cy="326" r="5.75"/><circle cx="1097" cy="326" r="5.75"/><circle cx="1583" cy="326" r="5.75"/>
<circle cx="612" cy="453" r="5.75"/><circle cx="1583" cy="453" r="5.75"/>
<circle cx="612" cy="580" r="5.75"/><circle cx="1097" cy="580" r="5.75"/><circle cx="1583" cy="580" r="5.75"/>
</g>
<path d="M1109.2 281.1A12.2 12.2 0 1 0 1104.8 293L1102.2 289.6A7.8 7.8 0 1 1 1104.6 281.2" fill="#fff" stroke="#5a5a5a" stroke-width="1.9"/>
<path d="M1097.5 281.2h19l-9.8 9.6z" fill="#fff" stroke="#5a5a5a" stroke-width="1.9" stroke-linejoin="miter"/>
</svg>


<!-- notes -->
<div class="a" style="left:291px;top:948px;width:1628px;height:1px;background:#c6c6c6"></div>
<div class="t" style="left:305px;top:959.5px;font-size:18.3px;color:#595959">Click to add notes</div>

<!-- status -->
<div id="status" class="a"></div>
<div class="t st" style="left:15px">Slide 4 of 7</div>
<div class="t st" style="left:145px;font-size:12.6px">English (United States)</div>
<div class="t st" style="left:317px;font-weight:bold;font-size:12.75px;color:#262626">Accessibility: Investigate</div>
<div class="t st" style="left:1309px">Notes</div>
<div class="t st" style="left:1389.5px;font-size:12.6px">Comments</div>
<div class="t st" style="left:1854.5px;font-size:12.5px">81%</div>
<div class="a" style="left:1475px;top:994px;width:50px;height:23px;background:#c8c8c8"></div>
<svg class="a" style="left:0;top:990px" width="1919" height="27" viewBox="0 990 1919 27" fill="none" stroke="#666" stroke-width="1">
<path d="M105.5 1000.5h7v13h-7zM112.5 1000.5h7v5" /><path d="M113.5 1006l2 2.5 4.5-6" stroke-width="1.1"/><path d="M112.5 1013.5v1.5"/>
<path d="M303 1001.5a6.5 6.5 0 1 0 4 11" stroke-width="1.1"/><path d="M304 998v6l3 2M306 1004h5" stroke-width="1.1"/><path d="M306.5 1009l6 6M312.5 1009l-6 6" stroke="#333" stroke-width="1.4"/>
<path d="M1289 1004.5l6.5-5 6.5 5z" fill="#666" stroke="none"/><path d="M1289 1007.5h13M1289 1010.5h13M1289 1013.5h10"/>
<path d="M1368.5 999.5h17v11h-10l-4 4v-4h-3z" fill="#666" stroke="#666"/>
<rect x="1491.5" y="999.5" width="16" height="14" stroke="#666"/><path d="M1494.5 1000v13M1494.5 1010.5h13" stroke="#666"/><rect x="1497.5" y="1001.5" width="8" height="6" stroke="#666"/>
<rect x="1540.5" y="999.5" width="7" height="5"/><rect x="1550.5" y="999.5" width="7" height="5"/><rect x="1540.5" y="1007.5" width="7" height="5"/><rect x="1550.5" y="1007.5" width="7" height="5"/>
<path d="M1591.5 999.5h16v12h-16zM1599.5 1000v13" stroke="#666" stroke-width="1.2"/><path d="M1593.5 1002.5h3.5M1593.5 1004.5h3.5M1593.5 1006.5h3.5M1593.5 1008.5h3.5M1602.5 1002.5h3.5M1602.5 1004.5h3.5M1602.5 1006.5h3.5M1602.5 1008.5h3.5" stroke="#666" stroke-width="1"/><path d="M1598 1012l1.5 2 1.5-2z" fill="#666" stroke="none"/>
<path d="M1641.5 999.5h17M1643.5 1000v7h13v-7M1650 1007v5M1646 1014.5h8"/>
<path d="M1682 1006.5h9M1698 1006.5h125M1829 1006.5h9M1833.5 1002v9" stroke="#505050"/>
<path d="M1760.5 1003v8"/>
<rect x="1745" y="1000" width="6" height="14" fill="#444" stroke="none"/>
<g transform="translate(5.5 0.5) scale(0.82 1) translate(330 0)"></g><rect x="1897.5" y="999.5" width="13" height="13"/><path d="M1904 1001v3M1902.3 1002.5l1.7-1.7 1.7 1.7M1904 1011v-3M1902.3 1009.5l1.7 1.7 1.7-1.7M1899 1006h3M1900.5 1004.3l-1.7 1.7 1.7 1.7M1909 1006h-3M1907.5 1004.3l1.7 1.7-1.7 1.7" stroke-width="0.9"/>
</svg>
</body></html>
